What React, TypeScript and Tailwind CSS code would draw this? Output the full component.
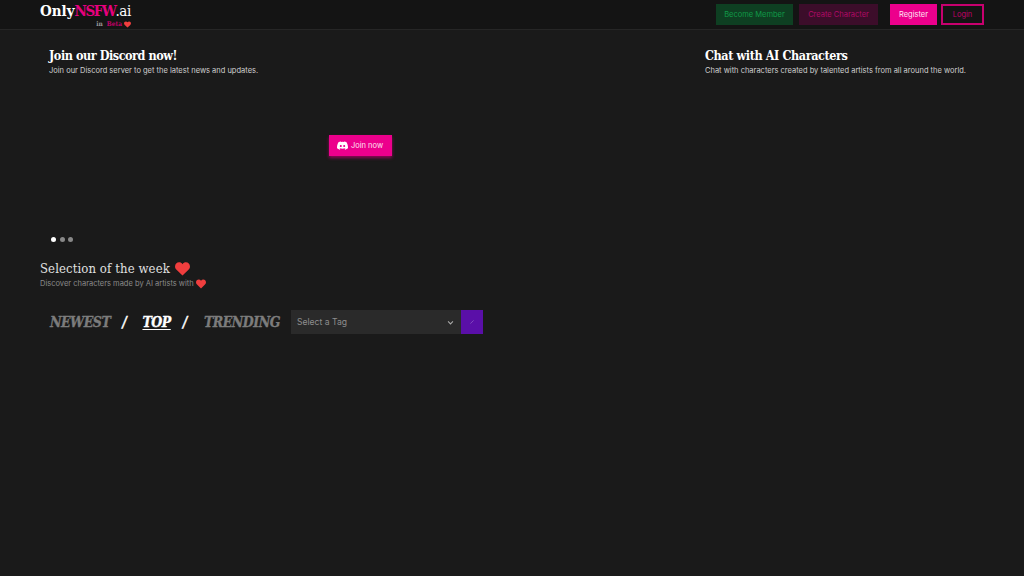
import React from "react";

const slab = "font-['DejaVu_Serif_Condensed','DejaVu_Serif',serif]";

function Heart({ className }: { className: string }) {
  return (
    <svg viewBox="0 0 16 15" className={className} aria-hidden="true">
      <path
        fill="#f03e3e"
        d="M8 14.500 1.600 8.400C.5 7.300 0 6.200 0 4.800 0 2.200 1.900.4 4.300.4c1.500 0 2.800.7 3.700 2 .9-1.300 2.200-2 3.700-2C14.100.4 16 2.200 16 4.800c0 1.400-.5 2.500-1.600 3.600L8 14.500Z"
      />
    </svg>
  );
}

function DiscordIcon() {
  return (
    <svg viewBox="0 0 24 24" className="w-[11px] h-[11px]" fill="#ffffff" aria-hidden="true">
      <path d="M20.300 4.400A19.800 19.800 0 0 0 15.400 3l-.6 1.300a18.300 18.300 0 0 0-5.600 0L8.600 3a19.700 19.700 0 0 0-4.900 1.500C.6 9.100-.3 13.700.100 18.200a20 20 0 0 0 6.100 3l1.300-2.100c-.7-.3-1.400-.6-2-1l.5-.4a14.200 14.200 0 0 0 12 0l.5.400c-.6.400-1.300.7-2 1l1.300 2.100a19.900 19.900 0 0 0 6.100-3c.5-5.200-.9-9.700-3.600-13.800ZM8.300 15.500c-1.200 0-2.200-1.100-2.200-2.400s1-2.400 2.200-2.400 2.200 1.100 2.200 2.400-1 2.400-2.200 2.400Zm7.400 0c-1.200 0-2.200-1.100-2.200-2.400s1-2.400 2.200-2.400 2.200 1.100 2.200 2.400-1 2.400-2.200 2.400Z" />
    </svg>
  );
}

export default function App() {
  return (
    <div className="min-h-[576px] bg-[#1a1a1a] font-['Inter',sans-serif] overflow-hidden">
      <header className="h-[30px] bg-[#141414] border-b border-[#262626] px-10 flex items-center justify-between">
        <div className="h-[29px] w-[92px] pt-[3px] flex flex-col">
          <div className={`${slab} text-[15px] font-bold leading-[17px] whitespace-nowrap text-white`}>
            Only<span className="text-[#e6007e] tracking-[-1.500px]">NSFW</span>
            <span className="font-normal tracking-[-0.3px]">.ai</span>
          </div>
          <div className="flex justify-end items-center gap-[2px] pr-[1px] text-[6.500px] leading-[8px] font-bold">
            <span className={`${slab} text-[#9a9a9a] mr-[2px]`}>in</span>
            <span className={`${slab} text-[#c00068]`}>Beta</span>
            <Heart className="w-[7px] h-[7px]" />
          </div>
        </div>
        <nav className="flex items-center text-[7.500px]">
          <button className="w-[77px] h-[21px] bg-[#0e3f22] text-[#109a48] mr-[6px]">Become Member</button>
          <button className="w-[79px] h-[21px] bg-[#3c0d2a] text-[#b00a66] mr-[12px]">Create Character</button>
          <button className="w-[47px] h-[21px] bg-[#ec008c] text-[#ffe3f2] mr-[4px]">Register</button>
          <button className="w-[43px] h-[21px] border-2 border-[#c8006f] text-[#c0006a]">Login</button>
        </nav>
      </header>

      <main className="px-10">
        <section className="relative h-[218px] overflow-hidden">
          <div className="flex gap-4">
            <div className="w-[640px] shrink-0 px-[9px] pt-[17px] relative h-[218px]">
              <h2 className={`${slab} text-[12.500px] font-bold leading-[18px] tracking-[-0.45px] text-white`}>Join our Discord now!</h2>
              <p className="text-[7.500px] leading-[12px] text-[#d0d0d0]">
                Join our Discord server to get the latest news and updates.
              </p>
              <div className="flex justify-center mt-[58px]">
                <button className="h-[21px] w-[63px] bg-[#ec008c] text-[#ffe3f2] text-[7.500px] flex items-center justify-center gap-[3px] shadow-[0_2px_3px_rgba(190,0,110,0.7)]">
                  <DiscordIcon />
                  Join now
                </button>
              </div>
            </div>
            <div className="w-[640px] shrink-0 px-[9px] pt-[17px]">
              <h2 className={`${slab} text-[12.500px] font-bold leading-[18px] tracking-[-0.4px] text-white`}>Chat with AI Characters</h2>
              <p className="text-[7.500px] leading-[12px] text-[#d0d0d0]">
                Chat with characters created by talented artists from all around the world.
              </p>
            </div>
          </div>
          <div className="absolute left-[11px] top-[207px] flex gap-[3.500px]">
            <span className="w-[5px] h-[5px] rounded-full bg-white" />
            <span className="w-[5px] h-[5px] rounded-full bg-[#888888]" />
            <span className="w-[5px] h-[5px] rounded-full bg-[#888888]" />
          </div>
        </section>

        <section className="mt-[12px]">
          <h3 className={`${slab} flex items-center gap-[5px] text-[13px] leading-[18px] tracking-[0.1px] text-[#e0e0e0]`}>
            Selection of the week <Heart className="w-[15px] h-[14px]" />
          </h3>
          <p className="flex items-center gap-[2px] text-[7.500px] leading-[12px] text-[#8a8a8a]">
            Discover characters made by AI artists with <Heart className="w-[10px] h-[10px]" />
          </p>
        </section>

        <section className="flex items-center mt-[20px] h-[24px]">
          <div className={`${slab} flex items-center w-[251px] pl-[10px] text-[14px] font-bold italic leading-[20px] tracking-[-0.5px] [-webkit-text-stroke:0.3px_currentColor]`}>
            <span className="text-[#7c7c7c]">NEWEST</span>
            <span className="text-white ml-[12px] mr-[16px]">/</span>
            <span className="text-white underline underline-offset-2">TOP</span>
            <span className="text-white ml-[12px] mr-[17px]">/</span>
            <span className="text-[#7c7c7c]">TRENDING</span>
          </div>
          <div className="w-[170px] h-[24px] bg-[#2a2a2a] flex items-center justify-between pl-[6px] pr-[7px] text-[8.600px] text-[#8e8e8e]">
            <span>Select a Tag</span>
            <svg viewBox="0 0 10 10" className="w-[7px] h-[7px]" fill="none" stroke="#aaaaaa" strokeWidth="1.500">
              <path d="M1.500 3.500 5 7l3.500-3.500" />
            </svg>
          </div>
          <div className="w-[22px] h-[24px] bg-[#5a0fa8] flex items-center justify-center">
            <svg viewBox="0 0 6 6" className="w-[4px] h-[4px]" fill="none" stroke="#c9b3e6" strokeWidth="0.900">
              <path d="M1 5 5 1" strokeDasharray="1.400 0.800" />
            </svg>
          </div>
        </section>
      </main>
    </div>
  );
}
